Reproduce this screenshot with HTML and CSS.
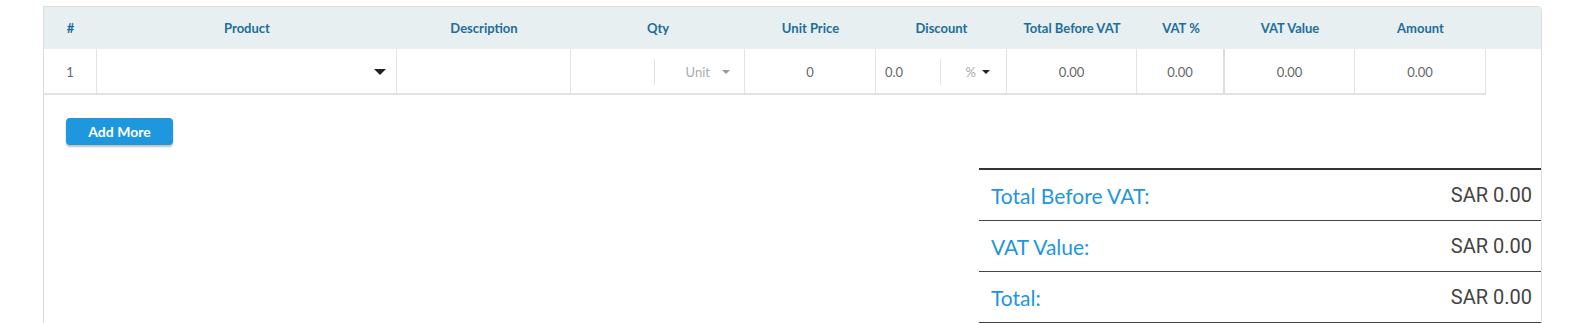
FILE: index.html
```html
<!DOCTYPE html>
<html lang="en">
<head>
    <meta charset="UTF-8">
    <meta name="viewport" content="width=device-width, initial-scale=1.0">
    <title>Invoice Items</title>
    <link rel="stylesheet" href="styles.css">
</head>
<body>
    <div class="page">
        <div class="card">
            <div class="items">
                <div class="items-head">
                    <div class="th">#</div>
                    <div class="th">Product</div>
                    <div class="th">Description</div>
                    <div class="th">Qty</div>
                    <div class="th">Unit Price</div>
                    <div class="th">Discount</div>
                    <div class="th">Total Before VAT</div>
                    <div class="th">VAT %</div>
                    <div class="th">VAT Value</div>
                    <div class="th">Amount</div>
                    <div class="th"></div>
                </div>
                <div class="items-row">
                    <div class="td">1</div>
                    <div class="td td-select">
                        <span class="caret"></span>
                    </div>
                    <div class="td"></div>
                    <div class="td td-split">
                        <div class="split-input qty-input"></div>
                        <div class="split-select qty-unit">
                            <span class="muted">Unit</span>
                            <span class="caret caret-small caret-grey"></span>
                        </div>
                    </div>
                    <div class="td">0</div>
                    <div class="td td-split">
                        <div class="split-input disc-input">0.0</div>
                        <div class="split-select disc-type">
                            <span class="muted">%</span>
                            <span class="caret caret-small"></span>
                        </div>
                    </div>
                    <div class="td">0.00</div>
                    <div class="td td-thick">0.00</div>
                    <div class="td">0.00</div>
                    <div class="td">0.00</div>
                </div>
            </div>

            <div class="actions">
                <button type="button" class="btn-add">Add More</button>
            </div>

            <div class="summary-wrap">
                <table class="summary">
                    <tr>
                        <td class="sum-label">Total Before VAT:</td>
                        <td class="sum-value">SAR 0.00</td>
                    </tr>
                    <tr>
                        <td class="sum-label">VAT Value:</td>
                        <td class="sum-value">SAR 0.00</td>
                    </tr>
                    <tr>
                        <td class="sum-label">Total:</td>
                        <td class="sum-value">SAR 0.00</td>
                    </tr>
                </table>
            </div>
        </div>
    </div>
</body>
</html>
```

FILE: styles.css
```css
body {
    margin: 0;
    font-family: Lato, "Open Sans", sans-serif;
    background-color: #ffffff;
    color: #555;
}

.page {
    padding: 6px 49px 0 43px;
}

.card {
    border: 1px solid #dddddd;
    border-radius: 0 4px 0 0;
    padding-bottom: 30px;
}

/* items grid */
.items-head,
.items-row {
    display: grid;
    grid-template-columns: 53px 300px 174px 174px 131px 131px 130px 88px 130px 131px 1fr;
}

.items-row {
    grid-template-columns: 53px 300px 174px 174px 131px 131px 130px 88px 130px 131px;
    width: 1442px;
    border-bottom: 2px solid #e2e2e2;
}

.items-head {
    background-color: #e8eff1;
    height: 42px;
    border-radius: 0 3px 0 0;
}

.th {
    display: flex;
    align-items: center;
    justify-content: center;
    font-size: 13px;
    font-weight: bold;
    color: #1b6e9a;
}

.td {
    box-sizing: border-box;
    height: 44px;
    padding-top: 2px;
    border-right: 1px solid #e3e3e3;
    display: flex;
    align-items: center;
    justify-content: center;
    font-size: 13px;
    color: #666;
}

.td-thick {
    border-right: 2px solid #dcdcdc;
}

.td-select {
    justify-content: flex-end;
    padding-right: 10px;
}

.td-split {
    justify-content: flex-start;
}

.split-input {
    height: 26px;
    display: flex;
    align-items: center;
    border-right: 1px solid #e3e3e3;
}

.qty-input {
    width: 83px;
}

.disc-input {
    width: 55px;
    padding-left: 9px;
}

.split-select {
    flex: 1;
    display: flex;
    align-items: center;
    justify-content: flex-end;
    gap: 9px;
}

.qty-unit {
    padding-right: 14px;
    gap: 12px;
}

.disc-type {
    padding-right: 16px;
    gap: 6px;
}

.muted {
    color: #aaa;
}

.caret {
    width: 0;
    height: 0;
    border-left: 6px solid transparent;
    border-right: 6px solid transparent;
    border-top: 6px solid #222;
}

.caret-small {
    border-left-width: 4px;
    border-right-width: 4px;
    border-top-width: 4px;
}

.caret-grey {
    border-top-color: #999;
}

/* add more */
.actions {
    padding: 23px 0 0 22px;
}

.btn-add {
    width: 107px;
    height: 27px;
    border: none;
    border-radius: 4px;
    background-color: #1e97df;
    color: #ffffff;
    font-family: Lato, sans-serif;
    font-size: 14px;
    font-weight: bold;
    box-shadow: 0 2px 2px rgba(0, 0, 0, 0.25);
    cursor: pointer;
}

/* totals */
.summary-wrap {
    display: flex;
    justify-content: flex-end;
    padding-top: 23px;
}

.summary {
    width: 562px;
    border-collapse: collapse;
    border-top: 2px solid #333;
}

.summary td {
    height: 50px;
    padding: 0 9px 0 12px;
    border-bottom: 1px solid #444;
}

.sum-label {
    font-size: 21px;
    color: #1f96de;
    text-align: left;
}

.sum-value {
    font-family: Roboto, "Liberation Sans", sans-serif;
    font-size: 20px;
    color: #444;
    text-align: right;
}
```
